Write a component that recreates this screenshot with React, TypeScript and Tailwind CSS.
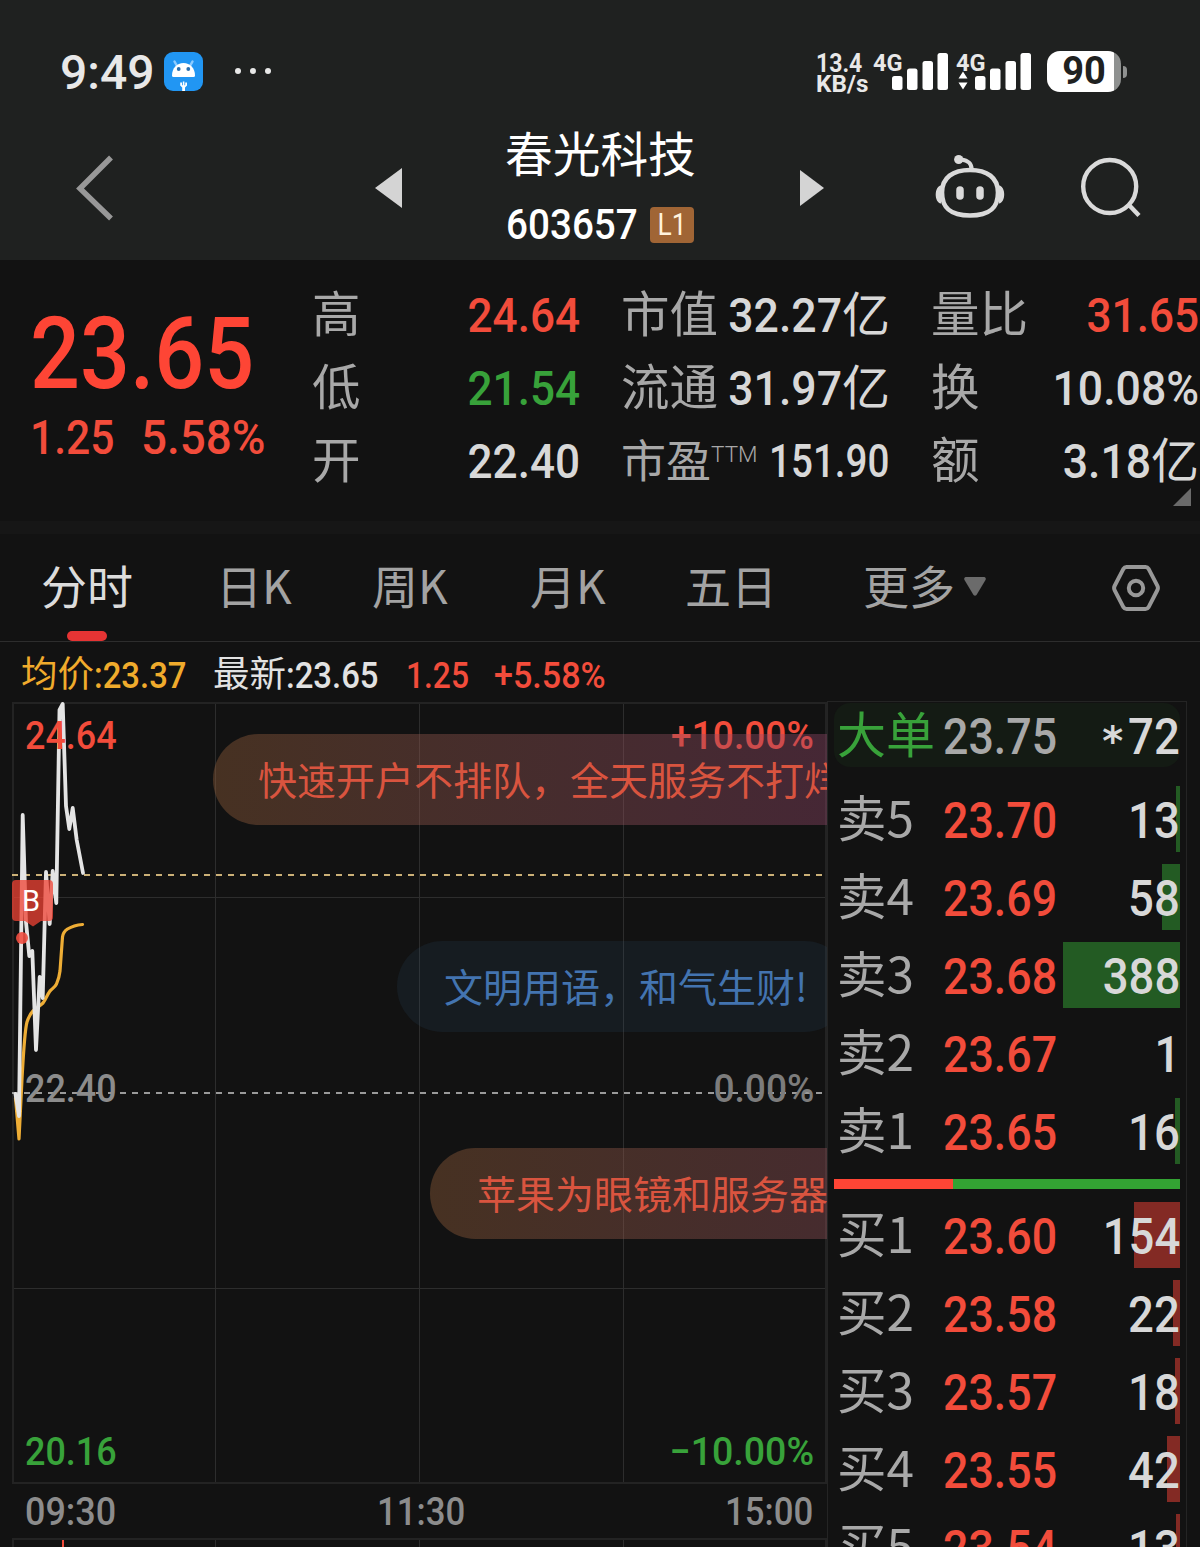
import React from 'react';
import clsx from 'clsx';

type Tone = 'up' | 'down' | 'flat';

interface Level {
  label: string;
  price: string;
  qty: number;
}

interface QuoteItem {
  label: React.ReactNode;
  value: string;
  unit?: string;
  tone: Tone;
  fit: string;
}

const NUM = "font-['Roboto','Noto_Sans_CJK_SC',sans-serif]";
const CJK = "font-['Noto_Sans_CJK_SC',sans-serif]";

const toneClasses: Record<Tone, string> = {
  up: 'text-[#f24c3b]',
  down: 'text-[#38a23a]',
  flat: 'text-[#d8d8d8]',
};

const quoteColumns: { className: string; items: QuoteItem[] }[] = [
  {
    className: 'w-[268px]',
    items: [
      { label: '高', value: '24.64', tone: 'up', fit: 'text-[49px] scale-x-[0.9]' },
      { label: '低', value: '21.54', tone: 'down', fit: 'text-[49px] scale-x-[0.9]' },
      { label: '开', value: '22.40', tone: 'flat', fit: 'text-[49px] scale-x-[0.9]' },
    ],
  },
  {
    className: 'w-[269px]',
    items: [
      { label: '市值', value: '32.27', unit: '亿', tone: 'flat', fit: 'text-[49px] scale-x-[0.91]' },
      { label: '流通', value: '31.97', unit: '亿', tone: 'flat', fit: 'text-[49px] scale-x-[0.91]' },
      {
        label: (
          <span className="flex items-start pt-0.5 text-[45px]">
            市盈<span className="font-['Roboto'] text-[22.500px] font-light leading-[54px]">TTM</span>
          </span>
        ),
        value: '151.90',
        tone: 'flat',
        fit: 'text-[46px] scale-x-[0.84]',
      },
    ],
  },
  {
    className: 'w-[268px]',
    items: [
      { label: '量比', value: '31.65', tone: 'up', fit: 'text-[49px] scale-x-[0.9]' },
      { label: '换', value: '10.08%', tone: 'flat', fit: 'text-[49px] scale-x-[0.91]' },
      { label: '额', value: '3.18', unit: '亿', tone: 'flat', fit: 'text-[49px] scale-x-[0.91]' },
    ],
  },
];

const asks: Level[] = [
  { label: '卖5', price: '23.70', qty: 13 },
  { label: '卖4', price: '23.69', qty: 58 },
  { label: '卖3', price: '23.68', qty: 388 },
  { label: '卖2', price: '23.67', qty: 1 },
  { label: '卖1', price: '23.65', qty: 16 },
];

const bids: Level[] = [
  { label: '买1', price: '23.60', qty: 154 },
  { label: '买2', price: '23.58', qty: 22 },
  { label: '买3', price: '23.57', qty: 18 },
  { label: '买4', price: '23.55', qty: 42 },
  { label: '买5', price: '23.54', qty: 13 },
];

// Narrow figures used for every price on the page, the caller picks the scale
const Num: React.FC<{ children: React.ReactNode; className?: string }> = ({ children, className }) => (
  <span className={clsx(NUM, 'inline-block whitespace-nowrap font-medium', className)}>{children}</span>
);

const SignalBars: React.FC<{ arrows?: boolean }> = ({ arrows }) => (
  <div className="relative h-[37px] w-[75px]">
    <span className={`absolute left-0 top-[-2px] text-[23.500px] font-bold leading-6 text-[#e8e8e8] ${NUM}`}>4G</span>
    <svg className="block" width="75" height="37" viewBox="0 0 75 37" fill="#fff">
      <rect x="19" y="23" width="10.5" height="14" rx="2.5" />
      <rect x="34" y="15.5" width="10.5" height="21.5" rx="2.5" />
      <rect x="49.500" y="8" width="10.5" height="29" rx="2.5" />
      <rect x="64.500" y="0" width="10.5" height="37" rx="2.5" />
      {arrows && <path d="M2.500 25.500 7 18.500l4.500 7zM2.500 29.500 7 36.500l4.500-7z" />}
    </svg>
  </div>
);

const StatusBar = () => (
  <div className="flex h-[112px] items-start pl-[60px] pt-[51px]">
    <span className={`mt-px w-[104px] text-[48px] font-medium leading-[42px] text-[#e8e8e8] ${NUM}`}>9:49</span>
    <svg className="mt-px" width="39" height="39" viewBox="0 0 39 39">
      <rect width="39" height="39" rx="9" fill="#2196f3" />
      <path d="M10.500 9.500 13 14M28.500 9.500 26 14" stroke="#8ccbff" strokeWidth="2.500" strokeLinecap="round" />
      <path d="M8 23.500C8 16 13 11 19.500 11S31 16 31 23.500Q31 25 29.500 25h-20Q8 25 8 23.500z" fill="#fff" />
      <circle cx="14.700" cy="17" r="1.900" fill="#2a6fae" />
      <circle cx="24.300" cy="17" r="1.900" fill="#2a6fae" />
      <path d="M16.200 30.500v3l2 2V39h2.800v-3.500l2-2v-3h-1.800v2.800h-.8V29.500h-1.600v3.800H18v-2.800z" fill="#fff" />
    </svg>
    <div className="ml-8 mt-[17px] flex gap-[9px]">
      {[0, 1, 2].map((i) => (
        <span key={i} className="size-1.5 rounded-full bg-[#e8e8e8]" />
      ))}
    </div>
    <div className="ml-auto flex items-start">
      <div className={`mt-[2px] w-[57px] font-bold text-[#e8e8e8] ${NUM}`}>
        <div className="origin-left scale-x-[0.92] text-[25px] leading-[21px]">13.4</div>
        <div className="origin-left scale-x-[1.01] text-[24px] leading-[21px]">KB/s</div>
      </div>
      <div className="mt-[2px] flex gap-2">
        <SignalBars />
        <SignalBars arrows />
      </div>
      <div className="ml-4 flex items-center">
        <div className="flex h-[41px] w-[74px] items-center justify-center rounded-[13px] bg-linear-to-r from-white from-90% to-[#8f9190] to-90%">
          <span className={`text-[38px] font-bold leading-[41px] text-[#1f2120] ${NUM}`}>90</span>
        </div>
        <span className="ml-0.5 mr-[73px] h-3 w-1 rounded-r-full bg-[#8f9190]" />
      </div>
    </div>
  </div>
);

const NavBar = () => (
  <div className="flex h-[148px] items-start">
    <svg className="ml-[76px] mt-[43px]" width="38" height="66" viewBox="0 0 38 66" fill="none">
      <path d="M35 2.500 4 33.500l31 30" stroke="#989898" strokeWidth="5.500" />
    </svg>
    <svg className="ml-[261px] mt-14" width="27" height="40" viewBox="0 0 27 40">
      <path d="M0 20 27 0v40z" fill="#d4d4d4" />
    </svg>
    <div className="ml-[103px] flex w-[189px] flex-col">
      <h1 className={`mt-4 whitespace-nowrap text-[47.700px] leading-[48px] text-white ${CJK}`}>春光科技</h1>
      <div className="mt-7 flex items-center justify-between">
        <Num className="w-[130px] origin-left translate-x-px scale-x-[0.92] text-[42px] leading-[42px] text-white">603657</Num>
        <span className={`flex h-9 w-11 items-center justify-center rounded bg-[#a06535] text-[31px] leading-9 text-[#fff3de] ${NUM}`}>
          <span className="scale-x-[0.85]">L1</span>
        </span>
      </div>
    </div>
    <svg className="ml-[106px] mt-[58px]" width="24" height="36" viewBox="0 0 24 36">
      <path d="M24 18 0 0v36z" fill="#d4d4d4" />
    </svg>
    <svg className="ml-[110px] mt-[42px]" width="72" height="66" viewBox="934 154 72 66" fill="none" stroke="#dadada">
      <path
        d="M970 170c17 0 28 7.500 28 22.500 0 15.500-8 23-28 23s-28-7.500-28-23c0-15 11-22.500 28-22.500z"
        strokeWidth="4.600"
      />
      <path d="M971.500 169c0-6-3-8.500-10.500-9.500" strokeWidth="4.200" />
      <circle cx="958.700" cy="159.500" r="4.600" fill="#dadada" stroke="none" />
      <path d="M941 185.500c-7 1-7 17 0 18zM999 185.500c7 1 7 17 0 18z" fill="#dadada" stroke="none" />
      <path d="M960 190v6M980 190v6" strokeWidth="7.500" strokeLinecap="round" />
    </svg>
    <svg className="ml-[73px] mt-[44px]" width="64" height="64" viewBox="1079 156 64 64" fill="none" stroke="#dadada" strokeWidth="4.400">
      <circle cx="1109.700" cy="186.500" r="26.500" />
      <path d="m1128.500 204.500 10.500 11" />
    </svg>
  </div>
);

const QuotePanel = () => (
  <section className="relative flex h-[261px] pl-[30px] pt-[19px]">
    <div className="w-[282px] text-[#fe4535]">
      <Num className="mt-5 origin-left scale-x-[0.87] text-[101px] leading-[110px]">23.65</Num>
      <div className="-mt-px flex text-[49px] leading-[60px] text-[#f24c3b]">
        <Num className="w-[111px] origin-left scale-x-[0.87]">1.25</Num>
        <Num className="origin-left scale-x-[0.935]">5.58%</Num>
      </div>
    </div>
    <div className="flex gap-[41px]">
      {quoteColumns.map((col, i) => (
        <div key={i} className={clsx('flex shrink-0 flex-col', col.className)}>
          {col.items.map((item) => (
            <div key={item.value} className="flex h-[73px] items-center justify-between">
              <span className={`whitespace-nowrap pb-2 text-[48.500px] leading-[63px] text-[#a8a8a8] ${CJK}`}>{item.label}</span>
              <span className={clsx('flex w-0 items-center justify-end', toneClasses[item.tone])}>
                <Num className={clsx('origin-right leading-[73px]', item.fit)}>{item.value}</Num>
                {item.unit && <span className={`pb-2 text-[48px] leading-[63px] ${CJK}`}>{item.unit}</span>}
              </span>
            </div>
          ))}
        </div>
      ))}
    </div>
    <svg className="absolute bottom-[15px] right-[9px]" width="18" height="18" viewBox="0 0 18 18">
      <path d="M18 0v18H0z" fill="#6a6a6a" />
    </svg>
  </section>
);

const PeriodTabs = () => (
  <nav className={`flex h-[108px] items-start border-b border-[#2d2d2d] pl-[41px] text-[46px] leading-[96px] text-[#a3a3a3] ${CJK}`}>
    <div className="flex w-[92px] flex-col items-center text-[#dcdcdc]">
      <span className="pt-[3px] leading-[94px]">分时</span>
      <span className="h-2.5 w-10 rounded-full bg-[#e63434]" />
    </div>
    <span className="ml-[83px] mt-[2px] w-[156px]">日K</span>
    <span className="mt-[2px] w-[158px]">周K</span>
    <span className="mt-[2px] w-[155px]">月K</span>
    <span className="mt-[2px] w-[178px]">五日</span>
    <span className="mt-[2px] w-[101px]">更多</span>
    <svg className="mt-[43px]" width="22" height="19" viewBox="0 0 22 19">
      <path d="M1.500 0h19q2 1 1 3L12.500 18q-1.500 1.500-3 0L.500 3q-1-2 1-3z" fill="#6b6b6b" />
    </svg>
    <svg className="ml-[126px] mt-[30px]" width="48" height="48" viewBox="0 0 48 48" fill="none" stroke="#989898" strokeWidth="4">
      <path d="M14.500 3h19q2 0 3 1.700l8.800 17q1.200 2.300 0 4.600l-8.800 17q-1 1.700-3 1.700h-19q-2 0-3-1.700l-8.800-17q-1.200-2.300 0-4.600l8.800-17q1-1.700 3-1.700z" />
      <circle cx="24" cy="24" r="7.200" />
    </svg>
  </nav>
);

const PriceSummary = () => (
  <div className="flex h-[60px] items-start pl-[21px] text-[36.500px] leading-[60px]">
    <div className="flex w-[192px] text-[#f0ab2c]">
      <span className={CJK}>均价</span>
      <Num className="origin-left scale-x-[0.9] pt-1">:23.37</Num>
    </div>
    <div className="flex w-[193px] text-[#e2e2e2]">
      <span className={CJK}>最新</span>
      <Num className="origin-left scale-x-[0.9] pt-1">:23.65</Num>
    </div>
    <div className="flex text-[#f24c3b]">
      <Num className="w-[88px] origin-left scale-x-[0.87] pt-1">1.25</Num>
      <Num className="origin-left scale-x-[0.935] pt-1">+5.58%</Num>
    </div>
  </div>
);

const PriceLine = () => (
  <svg className="block" width="828" height="845" viewBox="0 702 828 845" fill="none">
    <g stroke="#2d2d2d">
      <path d="M215.500 702v781M419.500 702v781M623.500 702v781M12 897.500h815M12 1288.500h815" />
      <path d="M215.500 1539v8M419.500 1539v8M623.500 1539v8" />
    </g>
    <g stroke="#232323" strokeWidth="2">
      <path d="M13 703h813v780H13zM13 1547v-8h813v8" />
    </g>
    <path d="M12 875h811" stroke="#cbb077" strokeWidth="2" strokeDasharray="6 6" />
    <path d="M12 1093h811" stroke="#9a9a9a" strokeWidth="2" strokeDasharray="6 6" />
    <path d="M63 1540v7" stroke="#f24c3b" strokeWidth="2" />
    <path
      d="M15.500 1098 19 1139l3-60c1.500-28 3-50 5-57 2-6 4-9 6-11 3-3 7-5 10-8 3-4 4-8 7-12 3-3 5-4 6.500-7 2-5 3-8 3.500-13l2.500-34c.5-4 2-6 5-8 5-3 9-4 15-4.500"
      stroke="#eead35"
      strokeWidth="3.200"
      strokeLinecap="round"
      strokeLinejoin="round"
    />
    <path
      d="M15.500 1094 19 1116 22.700 815 26 922l3.300 34 3-5L36 1050l3.700-73 3 21L46 872l3.700 52 3-53 3.600 32L59.500 710l3.200-6L66 806l3.300 23 3.400-21 4 32 6.300 33"
      stroke="#e4e4e4"
      strokeWidth="3.800"
      strokeLinecap="round"
      strokeLinejoin="round"
    />
    <path d="M16 880h33q4 0 4 4v33q0 4-4 4h-8l-8 5.500-8-5.500h-9q-4 0-4-4v-33q0-4 4-4z" fill="#f04334" fillOpacity=".75" />
    <circle cx="22" cy="938" r="6" fill="#f04e40" fillOpacity=".9" />
  </svg>
);

const Bubble: React.FC<{ className: string; children: React.ReactNode }> = ({ className, children }) => (
  <div className={clsx('absolute h-[91px] whitespace-nowrap rounded-full text-[39px] leading-[88px]', CJK, className)}>
    {children}
  </div>
);

const Chart = () => (
  <div className="relative h-[845px] w-[827px] shrink-0 overflow-hidden text-[39.500px] leading-10">
    <PriceLine />
    <span className={`absolute left-[22px] top-[184px] text-[29px] leading-[30px] text-white ${NUM}`}>B</span>
    <Num className="absolute left-[25px] top-[14px] origin-left scale-x-[0.91] text-[#f24c3b]">24.64</Num>
    <Num className="absolute right-[13px] top-[14px] origin-right scale-x-[0.94] text-[#f24c3b]">+10.00%</Num>
    <Num className="absolute left-[25px] top-[367px] origin-left scale-x-[0.91] text-[#8c8c8c]">22.40</Num>
    <Num className="absolute right-[13px] top-[367px] origin-right scale-x-[0.94] text-[#7c7c7c]">0.00%</Num>
    <Num className="absolute left-[25px] top-[730px] origin-left scale-x-[0.91] text-[#38a23a]">20.16</Num>
    <Num className="absolute right-[13px] top-[730px] origin-right scale-x-[0.95] text-[#38a23a]">−10.00%</Num>
    <Num className="absolute left-[25px] top-[790px] origin-left scale-x-[0.91] text-[#8c8c8c]">09:30</Num>
    <Num className="absolute left-[377px] top-[790px] origin-left scale-x-[0.88] text-[#8c8c8c]">11:30</Num>
    <Num className="absolute right-[14px] top-[790px] origin-right scale-x-[0.88] text-[#8c8c8c]">15:00</Num>

    <Bubble className="left-[213px] top-8 w-[700px] bg-linear-to-r from-[#96603a]/40 to-[#93436f]/40 pl-[45px] text-[#d9543f]">
      快速开户不排队，全天服务不打烊
    </Bubble>
    <Bubble className="left-[397px] top-[239px] w-[453px] bg-[#2f5478]/15 pl-[47px] text-[#4374b0]">文明用语，和气生财!</Bubble>
    <Bubble className="left-[430px] top-[446px] w-[760px] bg-linear-to-r from-[#96603a]/40 to-[#93436f]/40 pl-[47px] text-[#d9543f]">
      苹果为眼镜和服务器
    </Bubble>
  </div>
);

const LevelRow: React.FC<{ level: Level; side: 'ask' | 'bid' }> = ({ level, side }) => (
  <div className="relative mb-3 flex h-[66px] items-center pl-[3px] text-[50px] leading-[66px]">
    <div
      className={clsx('absolute inset-y-0 right-0', side === 'ask' ? 'bg-[#235b23]' : 'bg-[#832a24]')}
      style={{ width: level.qty > 1 ? Math.max(3, level.qty * 0.302) : 0 }}
    />
    <span className={`w-[106px] pb-1.5 text-[49.500px] leading-[56px] text-[#a8a8a8] ${CJK}`}>{level.label}</span>
    <Num className="origin-left scale-x-[0.895] pt-1 text-[#f24c3b]">{level.price}</Num>
    <Num className="relative ml-auto origin-right scale-x-[0.91] pt-1 text-[#d8d8d8]">{level.qty}</Num>
  </div>
);

const OrderBook = () => (
  <aside className="-mt-px h-[846px] w-[360px] border-x border-t border-[#242424] px-[6px]">
    <div className="mb-[19px] mt-px flex h-[64px] items-center rounded-2xl bg-[#141b14] pl-[3px] text-[50px] leading-[64px]">
      <span className={`w-[106px] pb-1.5 text-[49px] leading-[54px] text-[#38a23a] ${CJK}`}>大单</span>
      <Num className="origin-left scale-x-[0.895] pt-1 text-[#a8a8a8]">23.75</Num>
      <span className="ml-auto flex items-center text-[#d8d8d8]">
        <span className="pt-3 font-['DejaVu_Sans',sans-serif] text-[40px] font-bold leading-[50px]">*</span>
        <Num className="origin-right scale-x-[0.91] pt-1">72</Num>
      </span>
    </div>
    {asks.map((level) => (
      <LevelRow key={level.label} level={level} side="ask" />
    ))}
    <div className="mb-[13px] mt-[15px] flex h-2.5 bg-[#33a333]">
      <div className="w-[119px] bg-[#fe4535]" />
    </div>
    {bids.map((level) => (
      <LevelRow key={level.label} level={level} side="bid" />
    ))}
  </aside>
);

export default function App() {
  return (
    <main className="h-[1547px] w-[1200px] overflow-hidden bg-[#121212]">
      <header className="h-[260px] bg-[#1f2120]">
        <StatusBar />
        <NavBar />
      </header>
      <QuotePanel />
      <div className="h-[13px] bg-[#161616]" />
      <PeriodTabs />
      <PriceSummary />
      <div className="flex">
        <Chart />
        <OrderBook />
      </div>
    </main>
  );
}
